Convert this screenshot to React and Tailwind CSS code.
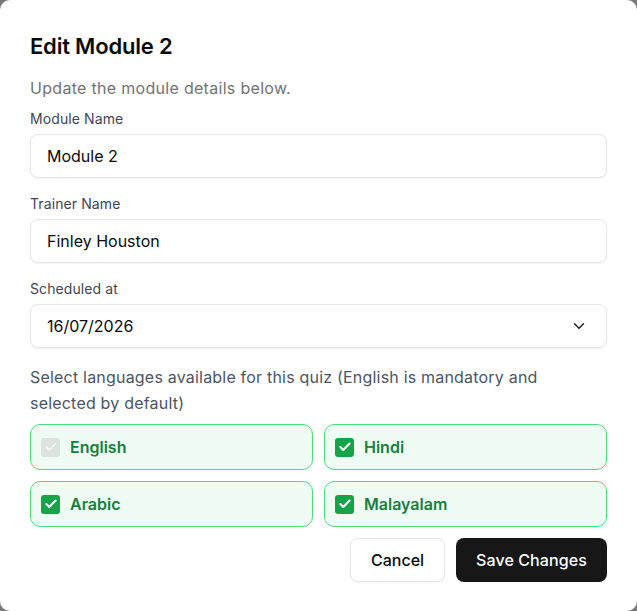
import { ChevronDown, Check } from 'lucide-react';

const LANGUAGES = [
  { name: 'English', disabled: true },
  { name: 'Hindi' },
  { name: 'Arabic' },
  { name: 'Malayalam' },
];

function Field({ label, value, select }) {
  return (
    <div className="flex flex-col gap-[5px]">
      <label className="text-[14px] leading-[20px] text-[#3f4654] tracking-[0.1px]">{label}</label>
      <div className="h-[44px] flex items-center justify-between pl-4 pr-[18px] rounded-lg border border-[#e5e7eb] bg-white shadow-[0_1px_2px_rgba(0,0,0,0.05)]">
        <span className="text-[16px] text-[#0a0a0a]">{value}</span>
        {select && <ChevronDown className="w-[18px] h-[18px] text-[#222]" strokeWidth={2} />}
      </div>
    </div>
  );
}

function LangBox({ name, disabled }) {
  return (
    <label className="h-[46px] flex items-center gap-[10px] pl-[10px] pr-[11px] rounded-[10px] border border-[#4ade80] bg-[#effcf3]">
      {disabled ? (
        <span className="w-[19px] h-[19px] rounded-[3px] bg-[#dde3df] flex items-center justify-center">
          <Check className="w-[14px] h-[14px] text-[#f4f6f5]" strokeWidth={3} />
        </span>
      ) : (
        <span className="w-[19px] h-[19px] rounded-[3px] bg-[#16a34a] flex items-center justify-center">
          <Check className="w-[14px] h-[14px] text-white" strokeWidth={3.5} />
        </span>
      )}
      <span className="text-[16px] font-semibold text-[#15803d]">{name}</span>
    </label>
  );
}

export default function App() {
  return (
    <div className="w-[637px] h-[611px] bg-[#7a7a7a]" style={{ fontFamily: 'Inter, "Noto Sans", sans-serif' }}>
      <div className="w-full h-full bg-white rounded-[10px] px-[30px] pt-[32px] flex flex-col">
        <h2 className="text-[22px] leading-[28px] font-semibold text-[#0a0a0a] tracking-[-0.2px]">Edit Module 2</h2>
        <p className="mt-[16px] text-[16px] leading-[24px] text-[#737373] tracking-[0.3px]">Update the module details below.</p>
        <div className="mt-[9px] flex flex-col gap-[16px]">
          <Field label="Module Name" value="Module 2" />
          <Field label="Trainer Name" value="Finley Houston" />
          <Field label="Scheduled at" value="16/07/2026" select />
        </div>
        <p className="mt-[16px] text-[16px] leading-[26px] text-[#4b5563] tracking-[0.2px]">
          Select languages available for this quiz (English is mandatory and selected by default)
        </p>
        <div className="mt-[8px] grid grid-cols-2 gap-[11px]">
          {LANGUAGES.map(l => (
            <LangBox key={l.name} name={l.name} disabled={l.disabled} />
          ))}
        </div>
        <div className="mt-[11px] flex justify-end gap-[11px]">
          <button className="h-[44px] px-5 rounded-lg border border-[#e5e7eb] bg-white text-[16px] font-medium text-[#0a0a0a] shadow-[0_1px_2px_rgba(0,0,0,0.05)]">Cancel</button>
          <button className="h-[44px] px-5 rounded-lg bg-[#171717] text-[16px] font-medium text-white tracking-[0.1px]">Save Changes</button>
        </div>
      </div>
    </div>
  );
}
